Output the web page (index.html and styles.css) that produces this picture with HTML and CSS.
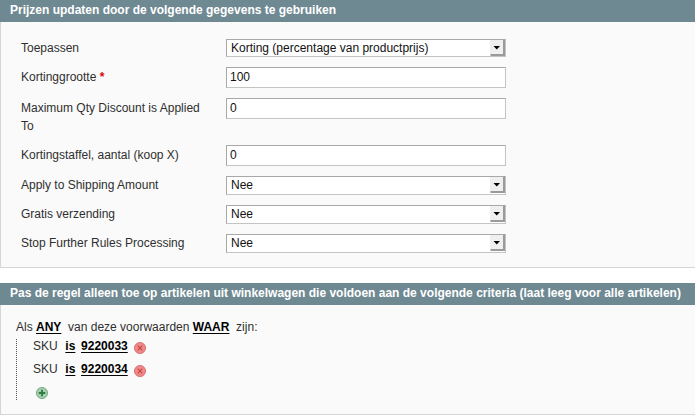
FILE: index.html
```html
<!DOCTYPE html>
<html lang="nl">
<head>
<meta charset="utf-8">
<title>Prijzen updaten</title>
<link rel="stylesheet" href="styles.css">
</head>
<body>
<section class="section">
  <h4 class="head">Prijzen updaten door de volgende gegevens te gebruiken</h4>
  <div class="box form">
    <div class="row"><label class="lab">Toepassen</label><div class="sel first-sel"><span>Korting (percentage van productprijs)</span><svg class="arrow" width="15" height="16" viewBox="0 0 15 16"><rect width="15" height="16" fill="#efefef"/><path d="M13 1.5V14H0.5V16H15V0H13Z" fill="#9a9a9a"/><path d="M3.5 6H10L6.75 9.5Z" fill="#000"/></svg></div></div>
    <div class="row tall"><label class="lab">Kortinggrootte <em class="req">*</em></label><div class="inp">100</div></div>
    <div class="row tall"><label class="lab">Maximum Qty Discount is Applied To</label><div class="inp">0</div></div>
    <div class="row tall"><label class="lab">Kortingstaffel, aantal (koop X)</label><div class="inp">0</div></div>
    <div class="row"><label class="lab">Apply to Shipping Amount</label><div class="sel"><span>Nee</span><svg class="arrow" width="15" height="16" viewBox="0 0 15 16"><rect width="15" height="16" fill="#efefef"/><path d="M13 1.5V14H0.5V16H15V0H13Z" fill="#9a9a9a"/><path d="M3.5 6H10L6.75 9.5Z" fill="#000"/></svg></div></div>
    <div class="row"><label class="lab">Gratis verzending</label><div class="sel"><span>Nee</span><svg class="arrow" width="15" height="16" viewBox="0 0 15 16"><rect width="15" height="16" fill="#efefef"/><path d="M13 1.5V14H0.5V16H15V0H13Z" fill="#9a9a9a"/><path d="M3.5 6H10L6.75 9.5Z" fill="#000"/></svg></div></div>
    <div class="row"><label class="lab">Stop Further Rules Processing</label><div class="sel"><span>Nee</span><svg class="arrow" width="15" height="16" viewBox="0 0 15 16"><rect width="15" height="16" fill="#efefef"/><path d="M13 1.5V14H0.5V16H15V0H13Z" fill="#9a9a9a"/><path d="M3.5 6H10L6.75 9.5Z" fill="#000"/></svg></div></div>
  </div>
</section>
<section class="section">
  <h4 class="head">Pas de regel alleen toe op artikelen uit winkelwagen die voldoen aan de volgende criteria (laat leeg voor alle artikelen)</h4>
  <div class="box rules">
    <p class="line">Als <b class="tok">ANY</b>&nbsp; van deze voorwaarden <b class="tok">WAAR</b>&nbsp; zijn:</p>
    <ul class="conds">
      <li class="cond">SKU&nbsp; <b class="tok op">is</b>&nbsp; <b class="tok">9220033</b>
        <svg class="ico" width="12" height="12" viewBox="0 0 13 13"><circle cx="6.5" cy="6.5" r="6" fill="#ee8a8a" stroke="#d86a6a"/><path d="M4 4L9 9M9 4L4 9" stroke="#c94242" stroke-width="1.2"/></svg></li>
      <li class="cond">SKU&nbsp; <b class="tok op">is</b>&nbsp; <b class="tok">9220034</b>
        <svg class="ico" width="12" height="12" viewBox="0 0 13 13"><circle cx="6.5" cy="6.5" r="6" fill="#ee8a8a" stroke="#d86a6a"/><path d="M4 4L9 9M9 4L4 9" stroke="#c94242" stroke-width="1.2"/></svg></li>
      <li class="add"><svg width="12" height="12" viewBox="0 0 13 13"><circle cx="6.5" cy="6.5" r="6" fill="#a5cfae" stroke="#6fa57c"/><path d="M6.5 3V10M3 6.5H10" stroke="#2f7d42" stroke-width="2"/></svg></li>
    </ul>
  </div>
</section>
</body>
</html>
```
FILE: styles.css
```css
* { box-sizing: border-box; }
html, body { margin: 0; padding: 0; }
body {
  background: #fff;
  color: #2f2f2f;
  font: 12px/18px "Liberation Sans", Arial, sans-serif;
  overflow: hidden;
}
.section { margin-bottom: 15px; }
.head {
  margin: 0;
  height: 22px;
  padding: 0 10px;
  background: #6f8992;
  color: #fff;
  font-size: 12px;
  font-weight: bold;
  line-height: 21px;
}
.box {
  background: #fafafa;
  border: 0 solid #d6d6d6;
  border-width: 0 0 1px 1px;
}
.form { height: 246px; padding: 17px 0 0 20px; }
.row { display: flex; align-items: flex-start; margin-bottom: 10px; }
.lab { width: 205px; flex: none; padding-right: 20px; }
.tall .lab { padding-top: 1px; }
.req { color: #d40707; font-style: normal; font-weight: bold; }
.sel, .inp {
  width: 280px;
  background: #fff;
  border: 1px solid #c4c4c4;
  border-top-color: #a8a8a8;
  border-left-color: #a8a8a8;
  color: #111;
  font-size: 12px;
}
.sel {
  height: 19px;
  display: flex;
  justify-content: space-between;
  line-height: 17px;
  padding-left: 4px;
}
.first-sel { height: 18px; }
.arrow { flex: none; }
.inp { height: 21px; line-height: 19px; padding-left: 3px; }
.rules { height: 110px; padding: 13px 0 0 15px; }
.line { margin: 0; }
.tok {
  color: #000;
  text-decoration: underline 1px #000;
  text-underline-offset: 2px;
  text-decoration-skip-ink: none;
}
.op { margin-left: 1px; margin-right: -1px; }
.conds {
  list-style: none;
  margin: 3px 0 0;
  padding: 0 0 0 16px;
  border-left: 1px dotted #555;
  width: 300px;
}
.cond { height: 23px; line-height: 15px; }
.ico { vertical-align: -4px; margin-left: 3px; }
.add { height: 15px; padding-top: 2px; padding-left: 3px; }
.add svg { display: block; }
```
